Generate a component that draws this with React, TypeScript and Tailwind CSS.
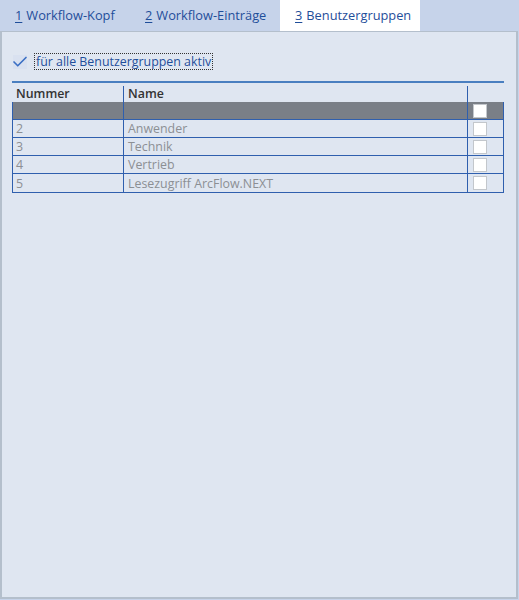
import { Check } from "lucide-react";

type Group = { nr: string; name: string };

const groups: Group[] = [
  { nr: "2", name: "Anwender" },
  { nr: "3", name: "Technik" },
  { nr: "4", name: "Vertrieb" },
  { nr: "5", name: "Lesezugriff ArcFlow.NEXT" },
];

const tabs = [
  { key: "1", label: "Workflow-Kopf", width: "w-[130px]" },
  { key: "2", label: "Workflow-Einträge", width: "w-[150px]" },
  { key: "3", label: "Benutzergruppen", width: "w-[140px]" },
];

function Box() {
  return <div className="h-[14px] w-[14px] border border-[#c3c7cc] bg-white" />;
}

export default function App() {
  const active = "3";
  return (
    <div
      className="flex h-[600px] w-[519px] flex-col bg-[#c6d3ea] text-[12.4px]"
      style={{ fontFamily: '"Open Sans", "Noto Sans", sans-serif' }}
    >
      {/* tab strip */}
      <div className="flex h-[31px] shrink-0 text-[12.8px]">
        {tabs.map((t) => (
          <div
            key={t.key}
            className={`${t.width} flex items-center pl-[15px] text-[#1f4e9a] ${
              t.key === active ? "bg-white" : ""
            }`}
          >
            <span className="underline underline-offset-2">{t.key}</span>
            <span className="ml-[4px]">{t.label}</span>
          </div>
        ))}
      </div>

      {/* page */}
      <div className="mb-[1px] mr-[1px] flex-1 border-x-2 border-b-2 border-t border-[#b4bfcc] bg-[#dfe6f1] px-[10px] pt-[21px]">
        <div className="flex items-center gap-[7px] pl-[1px]">
          <div className="flex h-[14px] w-[14px] items-center justify-center bg-[#d9e1f0]">
            <Check className="h-[18px] w-[18px] shrink-0 text-[#3b6fc4]" strokeWidth={2.2} />
          </div>
          <span className="border border-dotted border-[#333] px-[1px] leading-[15px] text-[#1f4e9a]">
            für alle Benutzergruppen aktiv
          </span>
        </div>

        {/* groups grid */}
        <div className="mt-[11px] w-[492px] border-t-2 border-[#4a7fc0]">
          <div className="grid h-[19px] grid-cols-[111px_344px_1fr] items-end font-semibold text-[#333]">
            <div className="pl-[4px] leading-[17px]">Nummer</div>
            <div className="flex h-[16px] items-center border-l border-[#2f5fae] pl-[4px]">Name</div>
            <div className="h-[16px] border-l border-[#2f5fae]" />
          </div>
          <div className="border-x border-b border-[#2f5fae]">
            <div className="grid h-[18px] grid-cols-[110px_344px_1fr] border-b border-[#2f5fae] bg-[#7a7f87]">
              <div />
              <div className="border-l border-[#2f5fae]" />
              <div className="flex items-center border-l border-[#2f5fae] pl-[5px]">
                <Box />
              </div>
            </div>
            {groups.map((g, i) => (
              <div
                key={g.nr}
                className={`grid h-[18px] grid-cols-[110px_344px_1fr] text-[#8c8f94] ${
                  i < groups.length - 1 ? "border-b border-[#2f5fae]" : ""
                }`}
              >
                <div className="flex items-center pl-[3px] pt-[2px] leading-none">{g.nr}</div>
                <div className="flex items-center border-l border-[#2f5fae] pl-[4px] pt-[2px] leading-none">
                  {g.name}
                </div>
                <div className="flex items-center border-l border-[#2f5fae] pl-[5px]">
                  <Box />
                </div>
              </div>
            ))}
          </div>
        </div>
      </div>
    </div>
  );
}
